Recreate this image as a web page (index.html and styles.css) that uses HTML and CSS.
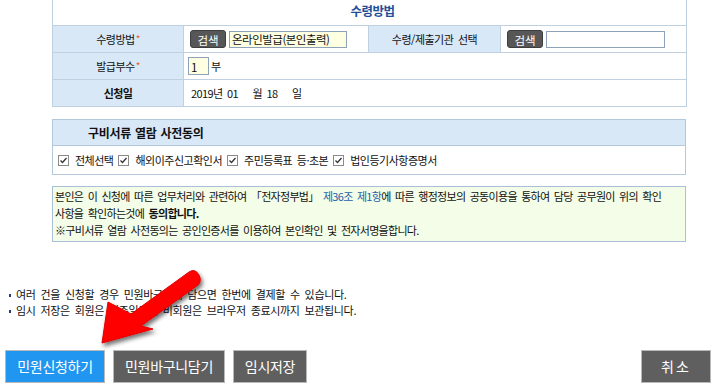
FILE: index.html
```html
<!DOCTYPE html>
<html lang="ko">
<head>
<meta charset="utf-8">
<link rel="stylesheet" href="styles.css">
</head>
<body>
<div class="page">
  <table class="form">
    <colgroup><col class="c1"><col class="c2"><col class="c3"><col class="c4"></colgroup>
    <tr class="title"><td colspan="4">수령방법</td></tr>
    <tr class="row">
      <th>수령방법<span class="req">*</span></th>
      <td><span class="btn-s">검색</span><span class="inp yellow w118">온라인발급(본인출력)</span></td>
      <th class="top">수령/제출기관 선택</th>
      <td><span class="btn-s">검색</span><span class="inp w119"></span></td>
    </tr>
    <tr class="row">
      <th>발급부수<span class="req">*</span></th>
      <td colspan="3" class="tight"><span class="inp yellow w21">1</span><span class="unit">부</span></td>
    </tr>
    <tr class="row">
      <th class="bold">신청일</th>
      <td colspan="3" class="date">2019년 01 <span class="sp">월</span> 18 <span class="sp">일</span></td>
    </tr>
  </table>

  <div class="consent">
    <div class="consent-head">구비서류 열람 사전동의</div>
    <div class="consent-body">
      <span class="chk"><svg viewBox="0 0 11 11" width="11" height="11"><rect x="0.5" y="0.5" width="10" height="10" fill="#fff" stroke="#8a8a8a"/><path d="M2.5 5.5 L4.5 7.5 L8.5 3" fill="none" stroke="#333" stroke-width="1.3"/></svg>전체선택</span>
      <span class="chk"><svg viewBox="0 0 11 11" width="11" height="11"><rect x="0.5" y="0.5" width="10" height="10" fill="#fff" stroke="#8a8a8a"/><path d="M2.5 5.5 L4.5 7.5 L8.5 3" fill="none" stroke="#333" stroke-width="1.3"/></svg>해외이주신고확인서</span>
      <span class="chk"><svg viewBox="0 0 11 11" width="11" height="11"><rect x="0.5" y="0.5" width="10" height="10" fill="#fff" stroke="#8a8a8a"/><path d="M2.5 5.5 L4.5 7.5 L8.5 3" fill="none" stroke="#333" stroke-width="1.3"/></svg>주민등록표 등·초본</span>
      <span class="chk"><svg viewBox="0 0 11 11" width="11" height="11"><rect x="0.5" y="0.5" width="10" height="10" fill="#fff" stroke="#8a8a8a"/><path d="M2.5 5.5 L4.5 7.5 L8.5 3" fill="none" stroke="#333" stroke-width="1.3"/></svg>법인등기사항증명서</span>
    </div>
  </div>

  <div class="agree">
    <p>본인은 이 신청에 따른 업무처리와 관련하여 「전자정부법」 <span class="law">제36조 제1항</span>에 따른 행정정보의 공동이용을 통하여 담당 공무원이 위의 확인</p>
    <p>사항을 확인하는것에 <b>동의합니다.</b></p>
    <p>※구비서류 열람 사전동의는 공인인증서를 이용하여 본인확인 및 전자서명을합니다.</p>
  </div>
</div>

<ul class="notes">
  <li>여러 건을 신청할 경우 민원바구니에 담으면 한번에 결제할 수 있습니다.</li>
  <li>임시 저장은 회원은 일주일동안 비회원은 브라우저 종료시까지 보관됩니다.</li>
</ul>

<div class="actions">
  <div class="left">
    <span class="btn blue w100">민원신청하기</span>
    <span class="btn gray w112">민원바구니담기</span>
    <span class="btn gray w74">임시저장</span>
  </div>
  <span class="btn gray w70">취소</span>
</div>

<svg class="arrow" width="720" height="386" viewBox="0 0 720 386">
  <defs>
    <filter id="sh" x="-20%" y="-20%" width="150%" height="150%">
      <feGaussianBlur in="SourceAlpha" stdDeviation="2"/>
      <feOffset dx="2" dy="3" result="b"/>
      <feComponentTransfer><feFuncA type="linear" slope="0.55"/></feComponentTransfer>
      <feMerge><feMergeNode/><feMergeNode in="SourceGraphic"/></feMerge>
    </filter>
  </defs>
  <path filter="url(#sh)" fill="#f00" stroke="#e00000" stroke-width="1" stroke-linejoin="round"
        d="M102 343 L108 302 L131 314 L189 272 Q195 268 199 275 Q202 281 198 285 L141 326 L153 329 Z"/>
</svg>
</body>
</html>
```

FILE: styles.css
```css
* { box-sizing: border-box; }
html, body { margin: 0; padding: 0; background: #fff; }
body {
  width: 720px;
  height: 386px;
  overflow: hidden;
  position: relative;
  font-family: "Noto Sans CJK KR", "Noto Sans", sans-serif;
  font-size: 11px;
  letter-spacing: -0.5px;
  word-spacing: 2px;
  color: #111;
}
.page { margin-left: 52px; width: 634px; }

.form {
  width: 634px;
  border-collapse: collapse;
  table-layout: fixed;
}
.c1 { width: 131px; }
.c2 { width: 185px; }
.c3 { width: 132px; }
.c4 { width: 186px; }
.form td, .form th {
  border: 1px solid #bfd0e0;
  padding: 0;
  font-weight: normal;
  vertical-align: middle;
}
.form tr.title td {
  height: 25px;
  border-top: none;
  text-align: center;
  color: #1f4f9a;
  font-weight: bold;
  font-size: 12.5px;
  letter-spacing: -0.5px;
  padding-bottom: 3px;
}
.form tr.row { height: 27px; }
.form th {
  background: #d9e8f6;
  text-align: center;
  color: #111;
}
.form th.bold { font-weight: bold; letter-spacing: -0.6px; }
.form th.top { vertical-align: top; padding-top: 5px; }
.form td { padding-left: 6px; }
.form td.tight { padding-left: 4px; }
.form td.date { padding-left: 7px; letter-spacing: -0.6px; }
.sp { margin-left: 10px; }
.req { color: #e85a1e; font-size: 10px; margin-left: 1px; vertical-align: 1px; }

.btn-s {
  display: inline-block;
  vertical-align: middle;
  width: 36px;
  height: 18px;
  line-height: 18px;
  background: #575757;
  color: #fff;
  border: 1px solid #3e3e3e;
  border-radius: 3px;
  text-align: center;
  font-size: 11.5px;
  letter-spacing: 0;
  margin-right: 3px;
}
.inp {
  display: inline-block;
  vertical-align: middle;
  height: 17px;
  line-height: 15px;
  border: 1px solid #8fa3b8;
  background: #fff;
  padding-left: 2px;
  font-size: 11.5px;
  letter-spacing: -0.5px;
  color: #111;
}
.inp.yellow { background: #ffffe2; }
.w118 { width: 118px; }
.w119 { width: 119px; }
.w21 { width: 21px; height: 18px; line-height: 18px; }
.unit { display: inline-block; vertical-align: middle; margin-left: 2px; }

.consent {
  margin-top: 12px;
  border: 1px solid #b4c8dc;
}
.consent-head {
  height: 26px;
  line-height: 25px;
  background: #d9e8f6;
  border-bottom: 1px solid #b4c8dc;
  padding-left: 35px;
  font-weight: bold;
  font-size: 12px;
  letter-spacing: -0.3px;
  word-spacing: 1px;
}
.consent-body {
  height: 28px;
  display: flex;
  align-items: center;
  gap: 5px;
  padding-left: 5px;
  padding-top: 1px;
}
.chk { display: inline-flex; align-items: center; gap: 6px; }
.chk svg { display: block; margin-top: 1px; }

.agree {
  margin-top: 11px;
  height: 56px;
  border: 1px solid #a9c0d8;
  background: #f3fde8;
  padding: 1px 2px 0;
  letter-spacing: -0.7px;
}
.agree p { margin: 0; height: 17px; line-height: 17px; }
.agree .law { color: #2860a8; }
.agree b { font-weight: bold; }

.notes {
  list-style: none;
  margin: 44px 0 0;
  padding: 0 0 0 16px;
  letter-spacing: -0.35px;
  word-spacing: 2.2px;
}
.notes li { position: relative; height: 16px; line-height: 16px; }
.notes li::before {
  content: "";
  position: absolute;
  left: -7px;
  top: 8px;
  width: 2px;
  height: 3px;
  background: #1c3f7a;
}

.actions {
  margin-top: 32px;
  padding: 0 9px 0 5px;
  display: flex;
  justify-content: space-between;
}
.actions .left { display: flex; gap: 8px; }
.btn {
  display: flex;
  align-items: center;
  justify-content: center;
  height: 33px;
  border: 1px solid #b9b9b9;
  color: #fff;
  font-size: 14px;
  letter-spacing: -0.3px;
  word-spacing: 0;
}
.btn.blue { background: #2196f0; }
.btn.gray { background: #5f5f5f; }
.w100 { width: 100px; }
.w112 { width: 112px; }
.w74 { width: 74px; }
.w70 { width: 70px; letter-spacing: 2px; }

.arrow { position: absolute; left: 0; top: 0; pointer-events: none; }
```
